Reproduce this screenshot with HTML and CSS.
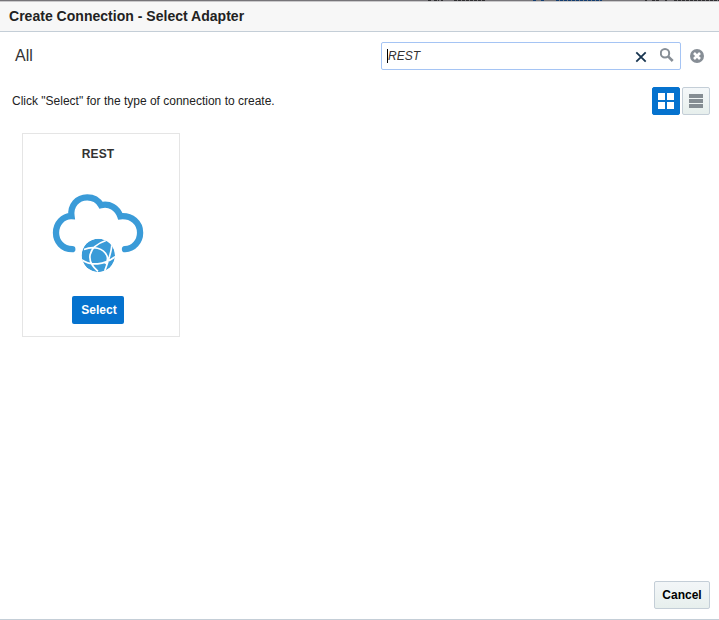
FILE: index.html
```html
<!DOCTYPE html>
<html lang="en">
<head>
<meta charset="utf-8">
<title>Create Connection - Select Adapter</title>
<link rel="stylesheet" href="styles.css">
</head>
<body>
<div class="dialog">
  <svg class="backdrop" width="719" height="1" viewBox="0 0 719 1" aria-hidden="true">
    <rect width="719" height="1" fill="#777579"/>
    <path d="M428 .5h3M434 .5h5M441 .5h2M454 .5h31" stroke="#2e2d30" stroke-dasharray="3 1"/>
    <path d="M533 .5h3M541 .5h3M556 .5h46" stroke="#123d70" stroke-dasharray="3 1"/>
    <path d="M645 .5h2M652 .5h7M665 .5h2M674 .5h45" stroke="#2e2d30" stroke-dasharray="3 1"/>
  </svg>
  <header class="titlebar"><h1>Create Connection - Select Adapter</h1></header>
  <div class="searchrow">
    <h2>All</h2>
    <div class="search">
      <span class="caret"></span><span class="query">REST</span>
      <svg class="clear" width="12" height="12" viewBox="0 0 12 12"><path d="M1.3 1.3 10.7 10.7M10.7 1.3 1.3 10.7" stroke="#17344f" stroke-width="1.8"/></svg>
      <svg class="find" width="14" height="14" viewBox="0 0 14 14" fill="none" stroke="#878e96"><circle cx="5" cy="5.2" r="4.2" stroke-width="2"/><path d="m8.1 8.3 4.6 4.7" stroke-width="2.6"/></svg>
    </div>
    <svg class="reset" width="14" height="14" viewBox="0 0 14 14"><circle cx="7" cy="7" r="7" fill="#878e96"/><path d="m4 4 6 6M10 4l-6 6" stroke="#fff" stroke-width="2.6"/></svg>
  </div>
  <div class="toolrow">
    <p>Click "Select" for the type of connection to create.</p>
    <div class="views">
      <span class="view active"><svg width="16" height="16" viewBox="0 0 16 16" fill="#fff"><path d="M0 0h7v7H0zM9 0h7v7H9zM0 9h7v7H0zM9 9h7v7H9z"/></svg></span>
      <span class="view"><svg width="14" height="14" viewBox="0 0 14 14" fill="#858d93"><path d="M0 0h14v4H0zM0 5h14v4H0zM0 10h14v4H0z"/></svg></span>
    </div>
  </div>
  <main class="adapters">
    <article class="card">
      <h3>REST</h3>
      <svg class="cloud" width="92" height="80" viewBox="52 193 92 80" fill="none">
        <defs><clipPath id="globe"><circle cx="98.3" cy="255.4" r="16.7"/></clipPath></defs>
        <path d="M72.3 249.2C62.3 249.2 56 241.5 56 232.7C56 223.5 63 215.9 71.5 216.2C70.1 205.5 77.2 197.4 87.2 197.4C93.2 197.4 98.3 200.4 101 205.2C109.5 203.2 117.3 207.6 120.3 216.3C132.1 215.2 140.1 223 140.1 232.7C140.1 241.7 133.6 248.6 125 249.2" stroke="#3a9bd8" stroke-width="6.3" stroke-linecap="round"/>
        <g clip-path="url(#globe)">
          <circle cx="98.3" cy="255.4" r="16.7" fill="#3a9bd8"/>
          <path d="M84 249.5C93 246 103.5 247.5 107 256C108.5 260 107 262 105.5 264M106 240.5C87 247 85.5 261 98 271.5M111.8 245C111.5 252 108 262 104.5 271.5M81 259.5C91 266.5 104 265 115.5 256.5" stroke="#fff" stroke-width="1.7"/>
        </g>
      </svg>
      <button class="select">Select</button>
    </article>
  </main>
  <footer><button class="cancel">Cancel</button></footer>
</div>
</body>
</html>
```
FILE: styles.css
```css
* { box-sizing: border-box; }
body { margin: 0; font-family: "Liberation Sans", Arial, sans-serif; color: #222; background: #fff; }
h1, h2, h3, p { margin: 0; }
svg { display: block; flex: none; }
button { font: bold 12px/16px "Liberation Sans", Arial, sans-serif; height: 28px; padding: 0; border-radius: 2px; }
.dialog { width: 719px; height: 620px; display: flex; flex-direction: column; border-bottom: 1px solid #c4ced7; }
.titlebar { height: 31px; padding: 6px 9px 0; background: #f7f7f7; border-top: 1px solid #cac9cb; border-bottom: 1px solid #c4ced7; }
h1 { font-size: 14px; line-height: 17px; letter-spacing: .02px; }
.searchrow { display: flex; align-items: flex-start; padding: 10px 15px 0; height: 55px; }
h2 { flex: 1; font-size: 16px; font-weight: 400; line-height: 20px; padding-top: 4px; color: #333; }
.search { width: 300px; height: 28px; border: 1px solid #a5c4f4; border-radius: 2px; display: flex; align-items: center; padding: 0 6px 0 5px; }
.caret { width: 1px; height: 14px; background: #000; }
.query { flex: 1; font-size: 12px; font-style: italic; color: #333; }
.clear { margin: 1px 13px 0 0; }
.find { margin-bottom: 2px; }
.reset { margin: 7px 0 0 9px; }
.toolrow { display: flex; justify-content: space-between; align-items: center; height: 28px; padding: 0 9px 0 12px; }
p { font-size: 12px; line-height: 16px; }
.views { display: flex; gap: 2px; }
.view { width: 28px; height: 28px; display: grid; place-items: center; border: 1px solid #c4ced7; border-radius: 2px; background: linear-gradient(#f5f8fa, #e7efed); }
.view.active { background: #0572ce; border-color: #0572ce; }
.adapters { flex: 1; padding: 18px 22px; }
.card { width: 158px; height: 204px; border: 1px solid #e5e5e5; display: flex; flex-direction: column; align-items: center; padding-top: 12px; }
h3 { font-size: 12px; line-height: 16px; color: #333; letter-spacing: .1px; margin-right: 6px; }
.cloud { margin: 31px 6px 0 0; }
.select { width: 52px; margin: 23px 6px 0 0; padding-left: 2px; border: 0; color: #fff; background: #0572ce; }
footer { display: flex; justify-content: flex-end; padding: 0 9px 10px; }
.cancel { width: 56px; color: #000; border: 1px solid #c4ced7; background: linear-gradient(#f3f6f8, #e7efed); }
```
